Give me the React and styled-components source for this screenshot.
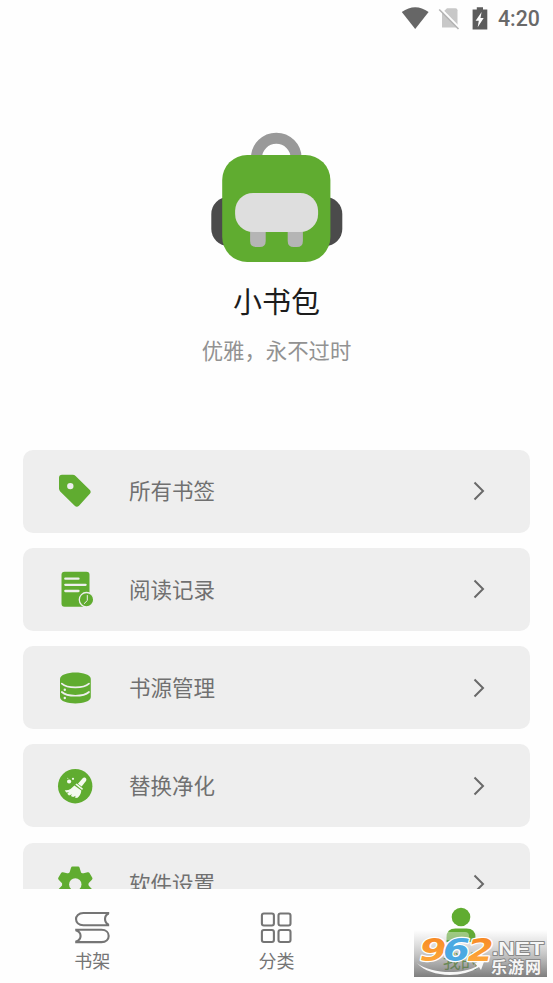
import React from "react";
import styled, { createGlobalStyle } from "styled-components";

const GREEN = "#60ac30";
const CARD = "#eeeeee";

const GlobalStyle = createGlobalStyle`
  * { box-sizing: border-box; }
  body { margin: 0; background: #fefefe; overflow: hidden; }
`;

const Screen = styled.div`
  position: relative;
  display: flex;
  flex-direction: column;
  width: 553px;
  height: 983px;
  overflow: hidden;
  background: #fefefe;
  font-family: "Noto Sans CJK SC", sans-serif;
`;

const StatusBar = styled.header`
  display: flex;
  justify-content: flex-end;
  height: 38px;
  flex: none;
  padding-right: 12px;
`;

const StatusIcons = styled.svg`
  width: 90px;
  height: 38px;
  margin-right: 7px;
`;

const Clock = styled.time`
  width: 43px;
  font: 500 21.3px/38px Roboto, sans-serif;
  color: #696969;
  white-space: nowrap;
`;

const Profile = styled.section`
  display: flex;
  flex-direction: column;
  align-items: center;
  flex: none;
  height: 411.6px;
  padding-top: 94px;
`;

const Logo = styled.svg`
  width: 132px;
  height: 131px;
`;

const Title = styled.h1`
  margin: 15px 0 0;
  font-size: 29px;
  line-height: 44px;
  font-weight: 400;
  color: #1c1c1c;
`;

const Subtitle = styled.p`
  margin: 12px 0 0;
  font-size: 21.4px;
  line-height: 32px;
  color: #929292;
`;

const Menu = styled.main`
  display: flex;
  flex-direction: column;
  flex: 1;
  min-height: 0;
  gap: 15.3px;
  padding: 0 23px;
  overflow: hidden;
`;

const MenuRow = styled.div`
  display: flex;
  align-items: center;
  flex: none;
  height: 83px;
  padding: 0 42px 0 32px;
  border-radius: 10px;
  background: ${CARD};
`;

const RowIcon = styled.svg`
  width: 40px;
  height: 40px;
`;

const RowLabel = styled.span`
  flex: 1;
  margin-left: 34px;
  padding-bottom: 1.6px;
  font-size: 21.5px;
  line-height: 32px;
  color: #707070;
`;

const Chevron = styled.svg`
  width: 16px;
  height: 22px;
`;

const NavBar = styled.nav`
  display: grid;
  grid-template-columns: repeat(3, 1fr);
  flex: none;
  height: 94px;
  background: #fefefe;
`;

const NavItem = styled.div`
  display: flex;
  flex-direction: column;
  align-items: center;
  padding-top: 18px;
  color: ${(p) => (p.$active ? GREEN : "#757575")};
`;

const NavIcon = styled.svg`
  width: 40px;
  height: 40px;
`;

const NavLabel = styled.span`
  font-size: 18px;
  line-height: 27px;
`;

const Watermark = styled.svg`
  position: absolute;
  left: 414px;
  top: 930px;
  width: 133px;
  height: 47px;
`;

const Tag = () => (
  <RowIcon viewBox="0 0 40 40">
    <path fill={GREEN} d="M7 3.8h10.7q1.7 0 2.9 1.2l14 13.8q2.2 2.2 0 4.3L24 34.7q-2.2 2-4.3 0L5.2 20.5Q4 19.3 4 17.6V6.8q0-3 3-3z" />
    <circle cx="15.3" cy="15.1" r="3.2" fill={CARD} />
  </RowIcon>
);

const History = () => (
  <RowIcon viewBox="0 0 40 40">
    <rect x="6.5" y="2.7" width="28" height="35" rx="3" fill={GREEN} />
    <path d="M10.3 9.7h13.2M10.3 15.8h20.3M10.3 22h13.2" stroke={CARD} strokeWidth="2.3" strokeLinecap="round" />
    <circle cx="31.5" cy="30.7" r="7.2" fill={GREEN} stroke={CARD} strokeWidth="1.3" />
    <path d="M32.3 26.5v5l-3 3" fill="none" stroke={CARD} strokeWidth="1" strokeLinecap="round" />
  </RowIcon>
);

const Database = () => (
  <RowIcon viewBox="0 0 40 40">
    <path fill={GREEN} d="M5 11C5 2.2 35.8 2.2 35.8 11v18c0 8.6-30.8 8.6-30.8 0z" />
    <path d="M6.8 15.6c5.5 5 21.7 5 27.2 0M6.8 24c5.5 5 21.7 5 27.2 0" fill="none" stroke={CARD} strokeWidth="1.7" strokeLinecap="round" />
    <circle cx="9.8" cy="21.7" r="1.2" fill={CARD} />
    <circle cx="9.8" cy="30" r="1.2" fill={CARD} />
  </RowIcon>
);

const Broom = () => (
  <RowIcon viewBox="0 0 40 40">
    <circle cx="20.2" cy="20.2" r="17.2" fill={GREEN} />
    <g fill="#f4faef">
      <path d="M22.9 17.8l4.8-5.5c1.7-1.8 4.7.3 3.3 2.6l-4.4 5.7z" />
      <path d="M20.3 18.4l1.4-1 6.2 5-.7 1.7z" />
      <path d="M19.4 19.4l6.9 5.1c-.2 3.5-2 6.2-4.2 7.6l-2.3-.7 1-1.7-2.7 1.3-2.3-.9 1.3-1.8-3.1 1.1-1.8-1.6 1.8-1.5-2.8.3-1.4-2.4c3.8.7 6.8-1.9 9.6-4.8z" />
      <circle cx="14.1" cy="15.5" r="2.1" />
      <circle cx="18" cy="12.8" r="1.1" />
      <circle cx="12.8" cy="12.3" r=".5" />
    </g>
  </RowIcon>
);

const Gear = () => (
  <RowIcon viewBox="0 0 40 40">
    <g fill={GREEN}>
      <circle cx="20.3" cy="20.4" r="13.2" />
      {[0, 60, 120, 180, 240, 300].map((a) => (
        <path key={a} transform={`rotate(${a} 20.3 20.4)`} d="M14.2 9.7l1.8-6q.3-1.3 1.5-1.3h5.6q1.2 0 1.5 1.3l1.8 6z" />
      ))}
    </g>
    <circle cx="20.3" cy="20.4" r="6.2" fill={CARD} />
  </RowIcon>
);

const Books = () => (
  <NavIcon viewBox="0 0 40 40" fill="none" stroke="currentColor" strokeWidth="2.1">
    <path d="M37.2 6H11.3C1.6 6 1.6 18.2 11.3 18.2h25.9M36.7 6.5c-4.9 2-4.9 9.2 0 11.2" />
    <path d="M3.2 22.8h26.2c9.7 0 9.7 12.3 0 12.3H3.2M3.7 23.3c6.5 2 6.5 9.3 0 11.3" />
  </NavIcon>
);

const Grid = () => (
  <NavIcon viewBox="0 0 40 40" fill="none" stroke="currentColor" strokeWidth="2.1">
    <rect x="5.9" y="6.5" width="12" height="12" rx="2" />
    <rect x="22.5" y="6.5" width="12" height="12" rx="2" />
    <rect x="5.9" y="23" width="12" height="12" rx="2" />
    <rect x="22.5" y="23" width="12" height="12" rx="2" />
  </NavIcon>
);

const Person = () => (
  <NavIcon viewBox="0 0 40 40" fill="currentColor">
    <circle cx="20" cy="10" r="9.3" />
    <path d="M5.5 35v-4.5q0-9 9-9h11q9 0 9 9V35z" />
  </NavIcon>
);

const rows = [
  { label: "所有书签", Icon: Tag },
  { label: "阅读记录", Icon: History },
  { label: "书源管理", Icon: Database },
  { label: "替换净化", Icon: Broom },
  { label: "软件设置", Icon: Gear },
];

const tabs = [
  { label: "书架", Icon: Books },
  { label: "分类", Icon: Grid },
  { label: "我的", Icon: Person, active: true },
];

export default function App() {
  return (
    <>
      <GlobalStyle />
      <Screen>
        <StatusBar>
          <StatusIcons viewBox="0 0 90 38">
            <path fill="#666" d="M.8 12Q14.2 2.6 27.6 12L14.2 29z" />
            <path fill="#c8c8c8" d="M46 8.2h8.5q2 0 2 2V27.5H41V13z" />
            <path stroke="#fefefe" strokeWidth="2.2" d="M39.5 8.5L58.5 28" />
            <path stroke="#b4b4b4" strokeWidth="1.6" d="M38.2 9.5L57.5 29" />
            <path fill="#5c5c5c" d="M75.8 7.2h6.2v2.4h4.3v20H71.6v-20h4.2z" />
            <path fill="#fefefe" d="M80.6 12l-6 8.8h3.2l-1.1 6.4 6-9.2h-3.2z" />
          </StatusIcons>
          <Clock>4:20</Clock>
        </StatusBar>

        <Profile>
          <Logo viewBox="0.7 0 132 131">
            <rect x="1" y="65" width="131" height="49" rx="17" fill="#4b4b4b" />
            <path d="M46.2 31v-5a19.8 19.8 0 0 1 39.6 0v5" fill="none" stroke="#999" strokeWidth="11" />
            <rect x="11.9" y="23" width="108.2" height="107" rx="25" fill={GREEN} />
            <path d="M39.8 95h15.6v14q0 6-6 6h-3.6q-6 0-6-6zM77.4 95h15.2v14q0 6-6 6H83.4q-6 0-6-6z" fill="#b5b5b5" />
            <rect x="24.8" y="61" width="83" height="39" rx="18" fill="#dedede" />
          </Logo>
          <Title>小书包</Title>
          <Subtitle>优雅，永不过时</Subtitle>
        </Profile>

        <Menu>
          {rows.map(({ label, Icon }) => (
            <MenuRow key={label}>
              <Icon />
              <RowLabel>{label}</RowLabel>
              <Chevron viewBox="0 0 16 22">
                <path d="M2.5 2.5l8.5 8.5-8.5 8.5" fill="none" stroke="#696969" strokeWidth="2" />
              </Chevron>
            </MenuRow>
          ))}
        </Menu>

        <NavBar>
          {tabs.map(({ label, Icon, active }) => (
            <NavItem key={label} $active={active}>
              <Icon />
              <NavLabel>{label}</NavLabel>
            </NavItem>
          ))}
        </NavBar>

        <Watermark viewBox="0 0 133 47">
          <defs>
            <linearGradient id="shade" x1="0" y1="0" x2="0" y2="1">
              <stop offset="0" stopColor="#888" stopOpacity="0" />
              <stop offset=".5" stopColor="#777" stopOpacity=".4" />
              <stop offset="1" stopColor="#666" stopOpacity=".84" />
            </linearGradient>
            <linearGradient id="orange" x1="0" y1="0" x2="0" y2="1">
              <stop offset="0" stopColor="#f58220" />
              <stop offset="1" stopColor="#ffb040" />
            </linearGradient>
          </defs>
          <rect x="26" y="2" width="29" height="8" rx="4" fill="#fff" fillOpacity=".4" />
          <rect width="133" height="47" fill="url(#shade)" />
          <path d="M3 33c14 11 45 12 60 3l-2-3 10-4-4 11-2-3C47 49 15 47 3 33z" fill="#f7f7f7" />
          <g fontFamily="DejaVu Sans, sans-serif" fontWeight="700" fontStyle="italic" fontSize="32" stroke="#fff" strokeWidth="2.4" paintOrder="stroke" strokeLinejoin="round">
            <text x="5.5" y="30.5" textLength="27" lengthAdjust="spacingAndGlyphs" fill="url(#orange)">9</text>
            <text x="29" y="30.5" textLength="27" lengthAdjust="spacingAndGlyphs" fill="#4ba9e2">6</text>
            <text x="53.5" y="30.5" textLength="26" lengthAdjust="spacingAndGlyphs" fill="url(#orange)">2</text>
          </g>
          <g fill="#f6f6f6" stroke="#888" strokeWidth="1.8" paintOrder="stroke" strokeLinejoin="round">
            <text x="78" y="25" fontFamily="Liberation Sans, sans-serif" fontWeight="700" fontSize="18.5" textLength="52" lengthAdjust="spacingAndGlyphs">.NET</text>
            <text x="77" y="43" fontFamily="Noto Sans CJK SC, sans-serif" fontWeight="700" fontSize="16" textLength="50" lengthAdjust="spacing">乐游网</text>
          </g>
        </Watermark>
      </Screen>
    </>
  );
}
